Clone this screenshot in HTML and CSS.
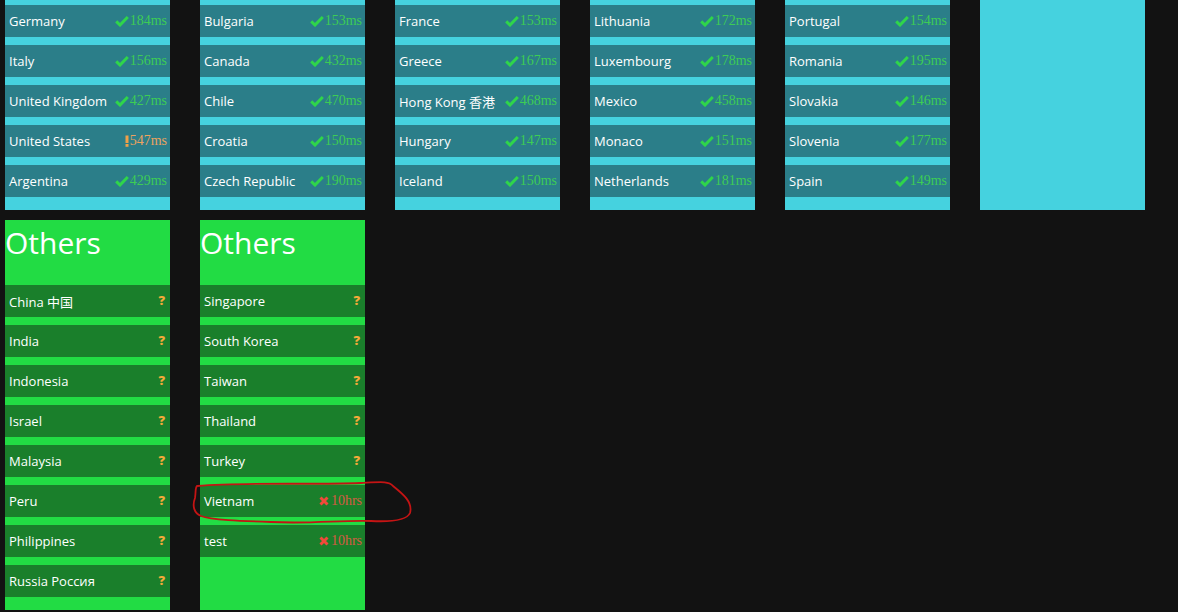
FILE: index.html
```html
<!DOCTYPE html>
<html>
<head>
<meta charset="utf-8">
<link rel="stylesheet" href="styles.css">
</head>
<body>
<svg width="0" height="0" class="defs">
  <defs>
    <symbol id="ok" viewBox="0 0 14 12"><path d="M1.2 6.4 L5 10 L12.8 2" fill="none" stroke="currentColor" stroke-width="3" stroke-linejoin="miter"/></symbol>
    <symbol id="warn" viewBox="0 0 4 12"><rect x="0.5" y="0.5" width="3" height="7.5"/><rect x="0.5" y="9" width="3" height="2.8"/></symbol>
    <symbol id="bad" viewBox="0 0 10 10"><path d="M1.5 1.5 L8.5 8.5 M8.5 1.5 L1.5 8.5" stroke="currentColor" stroke-width="3"/></symbol>
  </defs>
</svg>
<div class="board">
  <div class="col cyan">
    <div class="row"><span class="name">Germany</span><span class="val ok"><svg class="ic ic-ok"><use href="#ok"/></svg>184ms</span></div>
    <div class="row"><span class="name">Italy</span><span class="val ok"><svg class="ic ic-ok"><use href="#ok"/></svg>156ms</span></div>
    <div class="row"><span class="name">United Kingdom</span><span class="val ok"><svg class="ic ic-ok"><use href="#ok"/></svg>427ms</span></div>
    <div class="row"><span class="name">United States</span><span class="val warn"><svg class="ic ic-warn"><use href="#warn"/></svg>547ms</span></div>
    <div class="row"><span class="name">Argentina</span><span class="val ok"><svg class="ic ic-ok"><use href="#ok"/></svg>429ms</span></div>
  </div>
  <div class="col cyan">
    <div class="row"><span class="name">Bulgaria</span><span class="val ok"><svg class="ic ic-ok"><use href="#ok"/></svg>153ms</span></div>
    <div class="row"><span class="name">Canada</span><span class="val ok"><svg class="ic ic-ok"><use href="#ok"/></svg>432ms</span></div>
    <div class="row"><span class="name">Chile</span><span class="val ok"><svg class="ic ic-ok"><use href="#ok"/></svg>470ms</span></div>
    <div class="row"><span class="name">Croatia</span><span class="val ok"><svg class="ic ic-ok"><use href="#ok"/></svg>150ms</span></div>
    <div class="row"><span class="name">Czech Republic</span><span class="val ok"><svg class="ic ic-ok"><use href="#ok"/></svg>190ms</span></div>
  </div>
  <div class="col cyan">
    <div class="row"><span class="name">France</span><span class="val ok"><svg class="ic ic-ok"><use href="#ok"/></svg>153ms</span></div>
    <div class="row"><span class="name">Greece</span><span class="val ok"><svg class="ic ic-ok"><use href="#ok"/></svg>167ms</span></div>
    <div class="row"><span class="name">Hong Kong 香港</span><span class="val ok"><svg class="ic ic-ok"><use href="#ok"/></svg>468ms</span></div>
    <div class="row"><span class="name">Hungary</span><span class="val ok"><svg class="ic ic-ok"><use href="#ok"/></svg>147ms</span></div>
    <div class="row"><span class="name">Iceland</span><span class="val ok"><svg class="ic ic-ok"><use href="#ok"/></svg>150ms</span></div>
  </div>
  <div class="col cyan">
    <div class="row"><span class="name">Lithuania</span><span class="val ok"><svg class="ic ic-ok"><use href="#ok"/></svg>172ms</span></div>
    <div class="row"><span class="name">Luxembourg</span><span class="val ok"><svg class="ic ic-ok"><use href="#ok"/></svg>178ms</span></div>
    <div class="row"><span class="name">Mexico</span><span class="val ok"><svg class="ic ic-ok"><use href="#ok"/></svg>458ms</span></div>
    <div class="row"><span class="name">Monaco</span><span class="val ok"><svg class="ic ic-ok"><use href="#ok"/></svg>151ms</span></div>
    <div class="row"><span class="name">Netherlands</span><span class="val ok"><svg class="ic ic-ok"><use href="#ok"/></svg>181ms</span></div>
  </div>
  <div class="col cyan">
    <div class="row"><span class="name">Portugal</span><span class="val ok"><svg class="ic ic-ok"><use href="#ok"/></svg>154ms</span></div>
    <div class="row"><span class="name">Romania</span><span class="val ok"><svg class="ic ic-ok"><use href="#ok"/></svg>195ms</span></div>
    <div class="row"><span class="name">Slovakia</span><span class="val ok"><svg class="ic ic-ok"><use href="#ok"/></svg>146ms</span></div>
    <div class="row"><span class="name">Slovenia</span><span class="val ok"><svg class="ic ic-ok"><use href="#ok"/></svg>177ms</span></div>
    <div class="row"><span class="name">Spain</span><span class="val ok"><svg class="ic ic-ok"><use href="#ok"/></svg>149ms</span></div>
  </div>
  <div class="col cyan"></div>

  <div class="col green">
    <h2 class="head">Others</h2>
    <div class="row"><span class="name">China 中国</span><span class="val q">?</span></div>
    <div class="row"><span class="name">India</span><span class="val q">?</span></div>
    <div class="row"><span class="name">Indonesia</span><span class="val q">?</span></div>
    <div class="row"><span class="name">Israel</span><span class="val q">?</span></div>
    <div class="row"><span class="name">Malaysia</span><span class="val q">?</span></div>
    <div class="row"><span class="name">Peru</span><span class="val q">?</span></div>
    <div class="row"><span class="name">Philippines</span><span class="val q">?</span></div>
    <div class="row"><span class="name">Russia Россия</span><span class="val q">?</span></div>
  </div>
  <div class="col green">
    <h2 class="head">Others</h2>
    <div class="row"><span class="name">Singapore</span><span class="val q">?</span></div>
    <div class="row"><span class="name">South Korea</span><span class="val q">?</span></div>
    <div class="row"><span class="name">Taiwan</span><span class="val q">?</span></div>
    <div class="row"><span class="name">Thailand</span><span class="val q">?</span></div>
    <div class="row"><span class="name">Turkey</span><span class="val q">?</span></div>
    <div class="row marked"><span class="name">Vietnam</span><span class="val bad"><svg class="ic ic-bad"><use href="#bad"/></svg>10hrs</span>
      <svg class="scribble" viewBox="0 0 230 50" width="230" height="50"><path d="M6 6 C60 2 120 5 170 3 C190 2 198 1 202 6 C212 14 222 22 219 33 C216 40 200 42 180 41 C150 40 120 44 80 42 C50 41 20 40 10 36 C3 33 1 26 4 18 C5 12 4 8 6 6" fill="none" stroke="#c41414" stroke-width="1.8" stroke-linecap="round"/></svg>
    </div>
    <div class="row"><span class="name">test</span><span class="val bad"><svg class="ic ic-bad"><use href="#bad"/></svg>10hrs</span></div>
  </div>
</div>
</body>
</html>
```

FILE: styles.css
```css
html, body {
  margin: 0;
  padding: 0;
  background: #121212;
  height: 612px;
  overflow: hidden;
}
.defs { position: absolute; width: 0; height: 0; }
.board {
  display: flex;
  flex-wrap: wrap;
  column-gap: 30px;
  row-gap: 10px;
  padding-left: 5px;
  width: 1170px;
  font-family: "Open Sans", "Noto Sans CJK SC", sans-serif;
}
.col {
  width: 165px;
  display: flex;
  flex-direction: column;
  gap: 8px;
  padding-bottom: 13px;
  box-sizing: border-box;
}
.cyan {
  background: #45d2df;
  padding-top: 5px;
  height: 210px;
}
.green {
  background: #22dc44;
  height: 390px;
}
.cyan .row { background: #2b7e89; }
.green .row { background: #1a7f2b; }
.head {
  margin: 0;
  height: 57px;
  box-sizing: border-box;
  padding-top: 3px;
  font-weight: 400;
  font-size: 30px;
  line-height: 40px;
  color: #ffffff;
}
.row {
  height: 32px;
  display: flex;
  align-items: center;
  justify-content: space-between;
  padding: 0 3px 0 4px;
  position: relative;
}
.name {
  color: #ffffff;
  font-size: 13px;
}
.val {
  display: flex;
  align-items: center;
  font-family: "Liberation Serif", serif;
  font-size: 14px;
  margin-top: -1px;
}
.val.ok { color: #3dcc55; }
.val.warn { color: #eca35f; }
.val.bad { color: #d65a44; }
.val.q {
  font-family: "Open Sans", sans-serif;
  font-weight: 800;
  font-size: 13px;
  color: #f2aa3a;
  margin-right: 2px;
  margin-top: -2px;
}
.ic { fill: currentColor; }
.ic-ok { width: 14px; height: 12px; color: #2fd54a; margin-right: 1px; }
.ic-warn { width: 4px; height: 12px; color: #f0a048; margin-right: 1px; }
.ic-bad { width: 10px; height: 10px; color: #f04a3a; margin-right: 2px; }
.scribble {
  position: absolute;
  left: -9px;
  top: -5px;
  pointer-events: none;
}
```
